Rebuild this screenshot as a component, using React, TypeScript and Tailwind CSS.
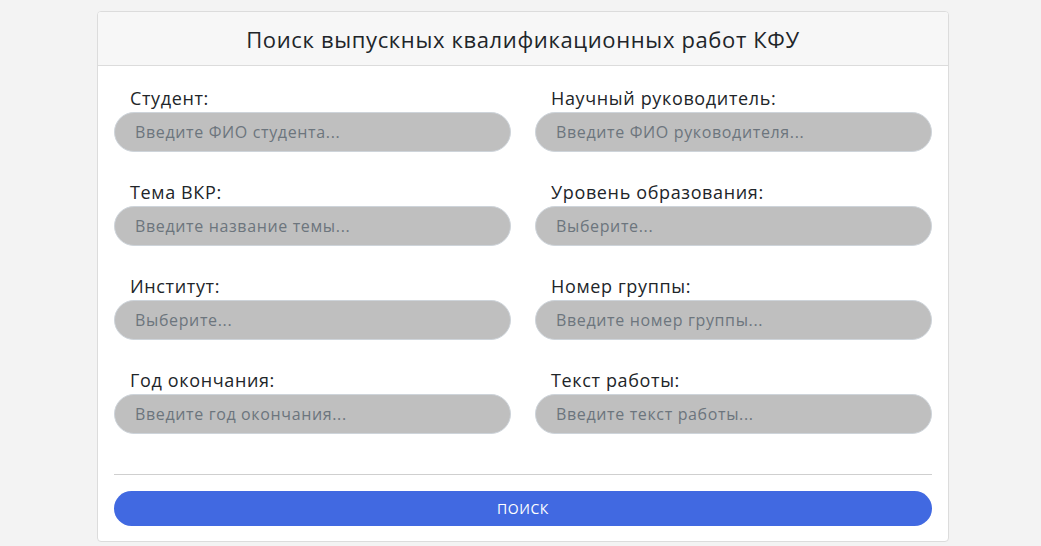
const fields = [
  { label: "Студент:", placeholder: "Введите ФИО студента..." },
  { label: "Научный руководитель:", placeholder: "Введите ФИО руководителя..." },
  { label: "Тема ВКР:", placeholder: "Введите название темы..." },
  { label: "Уровень образования:", placeholder: "Выберите..." },
  { label: "Институт:", placeholder: "Выберите..." },
  { label: "Номер группы:", placeholder: "Введите номер группы..." },
  { label: "Год окончания:", placeholder: "Введите год окончания..." },
  { label: "Текст работы:", placeholder: "Введите текст работы..." },
];

const App = () => {
  return (
    <div
      className="min-h-screen bg-[#f3f3f3] pt-[11px] pb-[4px] text-[#212529] tracking-[0.04em]"
      style={{ fontFamily: "'Open Sans', Lato, sans-serif" }}
    >
      <div className="ml-[97px] w-[852px] overflow-hidden rounded-[4px] border border-[#dcdcdc] bg-white">
        <div className="flex h-[54px] items-center justify-center border-b border-[#dcdcdc] bg-[#f7f7f7]">
          <h1 className="text-[22px] font-normal leading-none">Поиск выпускных квалификационных работ КФУ</h1>
        </div>

        <div className="px-4 pt-[20px] pb-[15px]">
          <div className="grid grid-cols-2 gap-x-6 gap-y-[28px]">
            {fields.map((f) => (
              <div key={f.label} className="flex flex-col">
                <label className="mb-[2px] px-4 text-[18px] leading-[24px]">{f.label}</label>
                <input
                  placeholder={f.placeholder}
                  className="h-[40px] rounded-full border border-[#ced4da] bg-[#bfbfbf] px-[20px] text-[16px] tracking-[0.04em] text-[#495057] placeholder:text-[#6c757d] outline-none"
                />
              </div>
            ))}
          </div>

          <div className="mt-[40px] mb-[16px] border-t border-[#cfcfcf]" />

          <button className="h-[35px] w-full rounded-full bg-[#4169e1] text-[14px] uppercase tracking-[0.04em] text-white">
            Поиск
          </button>
        </div>
      </div>
    </div>
  );
};

export default App;
